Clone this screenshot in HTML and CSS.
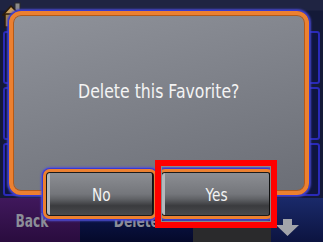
FILE: index.html
```html
<!DOCTYPE html>
<html>
<head>
<meta charset="utf-8">
<link rel="stylesheet" href="styles.css">
</head>
<body>
<div class="screen">
  <div class="under">
    <div class="topbar">
      <svg class="house" width="22" height="26" viewBox="0 0 22 26">
        <rect x="13" y="1" width="5" height="8" fill="#8a8a8a" stroke="#2a2a2a" stroke-width="1"/>
        <polygon points="1,13 9,4 18,13" fill="#c8a060" stroke="#2a1a08" stroke-width="1.5"/>
        <rect x="3" y="12" width="13" height="13" fill="#a8884c" stroke="#2a1a08" stroke-width="1.5"/>
      </svg>
    </div>
    <div class="list">
      <div class="row"></div>
      <div class="row"></div>
      <div class="row"></div>
    </div>
    <div class="bottombar">
      <div class="bb back"><span class="sq">Back</span></div>
      <div class="bb del"><span class="sq">Delete</span></div>
      <div class="bb pager"></div>
      <div class="bb arrow">
        <svg width="24" height="18" viewBox="0 0 24 18"><polygon points="7,0 16,0 16,6 23,6 11.5,17 0,6 7,6" fill="#a2a4aa"/></svg>
      </div>
    </div>
  </div>
  <div class="dialog">
    <p class="msg"><span class="sq">Delete this Favorite?</span></p>
  </div>
  <div class="actions">
    <button class="btn"><span class="face"><span class="sq">No</span></span></button>
    <button class="btn wide"><span class="face"><span class="sq">Yes</span></span></button>
  </div>
  <div class="highlight"></div>
</div>
</body>
</html>
```
FILE: styles.css
```css
* { box-sizing: border-box; }
html, body { margin: 0; padding: 0; background: #141a38; }
.screen {
  position: relative;
  width: 323px;
  height: 242px;
  overflow: hidden;
  background: #141a38;
  font-family: "DejaVu Sans", sans-serif;
}
.under { display: flex; flex-direction: column; height: 242px; }
.topbar {
  height: 28px;
  background: linear-gradient(#1f2442 0, #1f2442 10px, #141a38 11px);
  padding: 2px 0 0 2px;
}
.house { display: block; }
.list {
  flex: 1;
  display: flex;
  flex-direction: column;
  gap: 3px;
  padding: 3px 3px 0;
}
.row {
  height: 53px;
  border: 2px solid #2a2ab8;
  border-radius: 3px;
  background: #0f1540;
}
.bottombar {
  height: 44px;
  display: flex;
}
.bb { display: flex; align-items: center; justify-content: center; }
.bb .sq {
  font-weight: bold;
  font-size: 17px;
  color: #8c8e98;
  transform: scaleX(0.72);
}
.back { width: 80px; background: linear-gradient(#40185c, #2a0c3e); justify-content: flex-start; padding-left: 9px; padding-top: 1px; }
.del { width: 113px; background: linear-gradient(#0f1c5c, #05092a); padding-top: 1px; }
.pager { width: 78px; background: #2a2a2c; }
.arrow {
  flex: 1;
  background: linear-gradient(#1a2a6a, #0c1440);
  align-items: flex-end;
  justify-content: flex-start;
  padding: 0 0 5px 5px;
}
.arrow svg { display: block; }
.sq { display: inline-block; white-space: nowrap; }

.dialog {
  position: absolute;
  left: 9px;
  top: 11px;
  width: 300px;
  height: 184px;
  border: 4px solid #ec8030;
  border-radius: 12px;
  background: linear-gradient(165deg, #8f929a 0%, #7f828a 45%, #6b6e76 100%);
  box-shadow: 0 0 0 1px #3a3ad0, 0 0 2px 2px #4646c8, inset 0 0 0 1px #b45a18;
  margin: 0;
}
.msg {
  margin: 0;
  padding-top: 64px;
  text-align: center;
  color: #f4f4f4;
  font-size: 20px;
  line-height: 24px;
}
.msg .sq { transform: scaleX(0.785); }

.actions {
  position: absolute;
  left: 43px;
  top: 169px;
  display: flex;
  gap: 1px;
}
.btn {
  width: 114px;
  height: 50px;
  padding: 0;
  margin: 0;
  border: 3px solid #ec8030;
  border-radius: 7px;
  background: #1a1a1a;
  box-shadow: 0 0 0 1px #3a3ad0, 0 0 2px 2px #5050d8;
  display: flex;
  font-family: "DejaVu Sans", sans-serif;
}
.btn.wide { width: 116px; }
.face {
  flex: 1;
  margin: 1px;
  border-left: 3px solid #b4b8bc;
  border-right: 1px solid #101010;
  border-radius: 3px 2px 2px 3px;
  background: linear-gradient(#8c8e93 0%, #74767b 50%, #606266 62%, #3a3b3e 78%, #4a4b4e 100%);
  display: flex;
  align-items: center;
  justify-content: center;
  color: #f4f4f4;
  font-size: 18px;
}
.face .sq { transform: scaleX(0.76); }

.highlight {
  position: absolute;
  left: 155px;
  top: 160px;
  width: 122px;
  height: 68px;
  border: 6px solid #ff0000;
  box-shadow: inset 0 0 0 1px #8a8a8a;
}
```
